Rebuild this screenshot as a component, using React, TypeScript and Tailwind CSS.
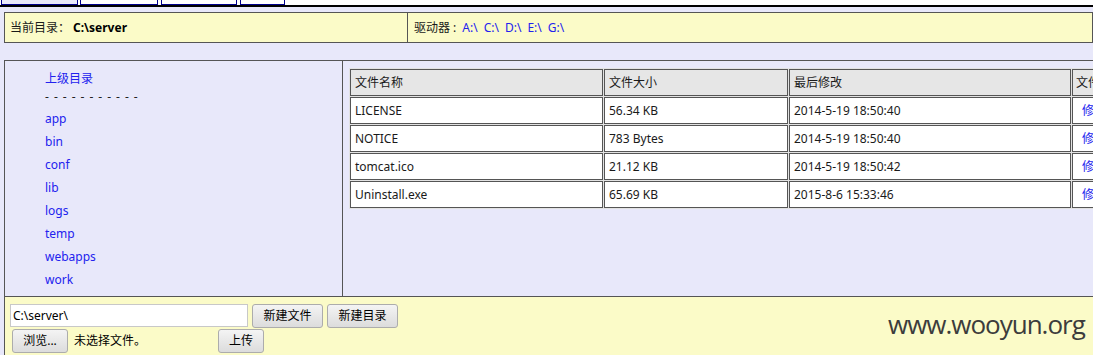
const files = [
  { name: 'LICENSE', size: '56.34 KB', time: '2014-5-19 18:50:40' },
  { name: 'NOTICE', size: '783 Bytes', time: '2014-5-19 18:50:40' },
  { name: 'tomcat.ico', size: '21.12 KB', time: '2014-5-19 18:50:42' },
  { name: 'Uninstall.exe', size: '65.69 KB', time: '2015-8-6 15:33:46' },
];

const dirs = ['app', 'bin', 'conf', 'lib', 'logs', 'temp', 'webapps', 'work'];
const drives = ['A:\\', 'C:\\', 'D:\\', 'E:\\', 'G:\\'];

const btn =
  'h-[24px] border border-[#acacac] rounded-[3px] bg-gradient-to-b from-[#f4f4f4] to-[#dcdcdc] text-[12px] text-black flex items-center justify-center';

const App = () => {
  return (
    <div className="relative h-[355px] w-[1093px] overflow-hidden bg-[#e8e8fa] font-['Noto_Sans','Noto_Sans_CJK_SC',sans-serif] text-[12px] text-[#1a1a1a]">
      {/* tabs */}
      <div className="flex h-[5px] bg-white pl-[1px]">
        <div className="w-[77px] border-x border-b border-[#00008b] bg-[#e8e8fa]" />
        <div className="ml-[2px] w-[78px] border-x border-b border-[#00008b]" />
        <div className="ml-[3px] w-[76px] border-x border-b border-[#00008b]" />
        <div className="ml-[3px] w-[45px] border-x border-b border-[#00008b]" />
      </div>
      <div className="h-[2px] bg-black" />

      {/* current dir bar */}
      <div className="ml-[4px] mt-[5px] flex h-[31px] border border-[#555] bg-[#fbfbc8]">
        <div className="flex w-[403px] items-center border-r border-[#555] pl-[5px]">
          <span>当前目录：</span>
          <span className="ml-[3px] font-bold text-black">C:\server</span>
        </div>
        <div className="flex items-center pl-[6px]">
          <span>驱动器 :</span>
          {drives.map((d) => (
            <a key={d} className="ml-[6px] text-[#2222ee]">
              {d}
            </a>
          ))}
        </div>
      </div>

      {/* main panel */}
      <div className="ml-[4px] mt-[17px] flex h-[236px] border-l border-t border-[#555]">
        <div className="w-[338px] border-r border-[#555] pl-[40px] pt-[9px]">
          <div className="flex h-[18px] items-center text-[#2222ee]">上级目录</div>
          <div className="flex h-[18px] items-center tracking-[0.95px] text-[#222]">- - - - - - - - - - -</div>
          <div className="mt-[1px]">
            {dirs.map((d) => (
              <div key={d} className="flex h-[23px] items-center text-[#2222ee]">
                {d}
              </div>
            ))}
          </div>
        </div>
        <div className="flex-1 overflow-hidden pl-[6px] pt-[7px]">
          <table className="w-[830px] table-fixed border-separate border-spacing-[1px] bg-[#e2e2e2]">
            <thead>
              <tr className="h-[27px] bg-[#e6e6e6]">
                <th className="w-[253px] border border-[#555] pl-[4px] text-left font-normal">文件名称</th>
                <th className="w-[184px] border border-[#555] pl-[4px] text-left font-normal">文件大小</th>
                <th className="w-[282px] border border-[#555] pl-[4px] text-left font-normal">最后修改</th>
                <th className="border border-[#555] pl-[3px] text-left font-normal">文件操作</th>
              </tr>
            </thead>
            <tbody>
              {files.map((f) => (
                <tr key={f.name} className="h-[27px] bg-white">
                  <td className="border border-[#555] pl-[4px]">{f.name}</td>
                  <td className="border border-[#555] pl-[4px]">{f.size}</td>
                  <td className="border border-[#555] pl-[4px]">{f.time}</td>
                  <td className="border border-[#555] pl-[9px] text-[#2222ee]">修改 删除 下载</td>
                </tr>
              ))}
            </tbody>
          </table>
        </div>
      </div>

      {/* bottom panel */}
      <div className="ml-[4px] h-[60px] border-l border-t border-[#555] bg-[#fbfbc8] pt-[7px]">
        <div className="flex items-start">
          <input
            readOnly
            value="C:\server\"
            className="ml-[5px] h-[23px] w-[238px] border border-[#c8c8c8] bg-white px-[2px] text-[12px] text-black outline-none"
          />
          <button className={`${btn} ml-[4px] w-[71px]`}>新建文件</button>
          <button className={`${btn} ml-[4px] w-[71px]`}>新建目录</button>
        </div>
        <div className="mt-[1px] flex items-center">
          <button className={`${btn} ml-[7px] h-[23px] w-[56px]`}>浏览...</button>
          <span className="ml-[6px] text-black">未选择文件。</span>
          <button className={`${btn} ml-[72px] h-[23px] w-[46px]`}>上传</button>
        </div>
      </div>

      {/* watermark */}
      <div className="absolute left-[888px] top-[305px] font-['Open_Sans',sans-serif] text-[26px] tracking-[-1px] text-[#3c3c3c]">
        www.wooyun.org
      </div>
    </div>
  );
};

export default App;
